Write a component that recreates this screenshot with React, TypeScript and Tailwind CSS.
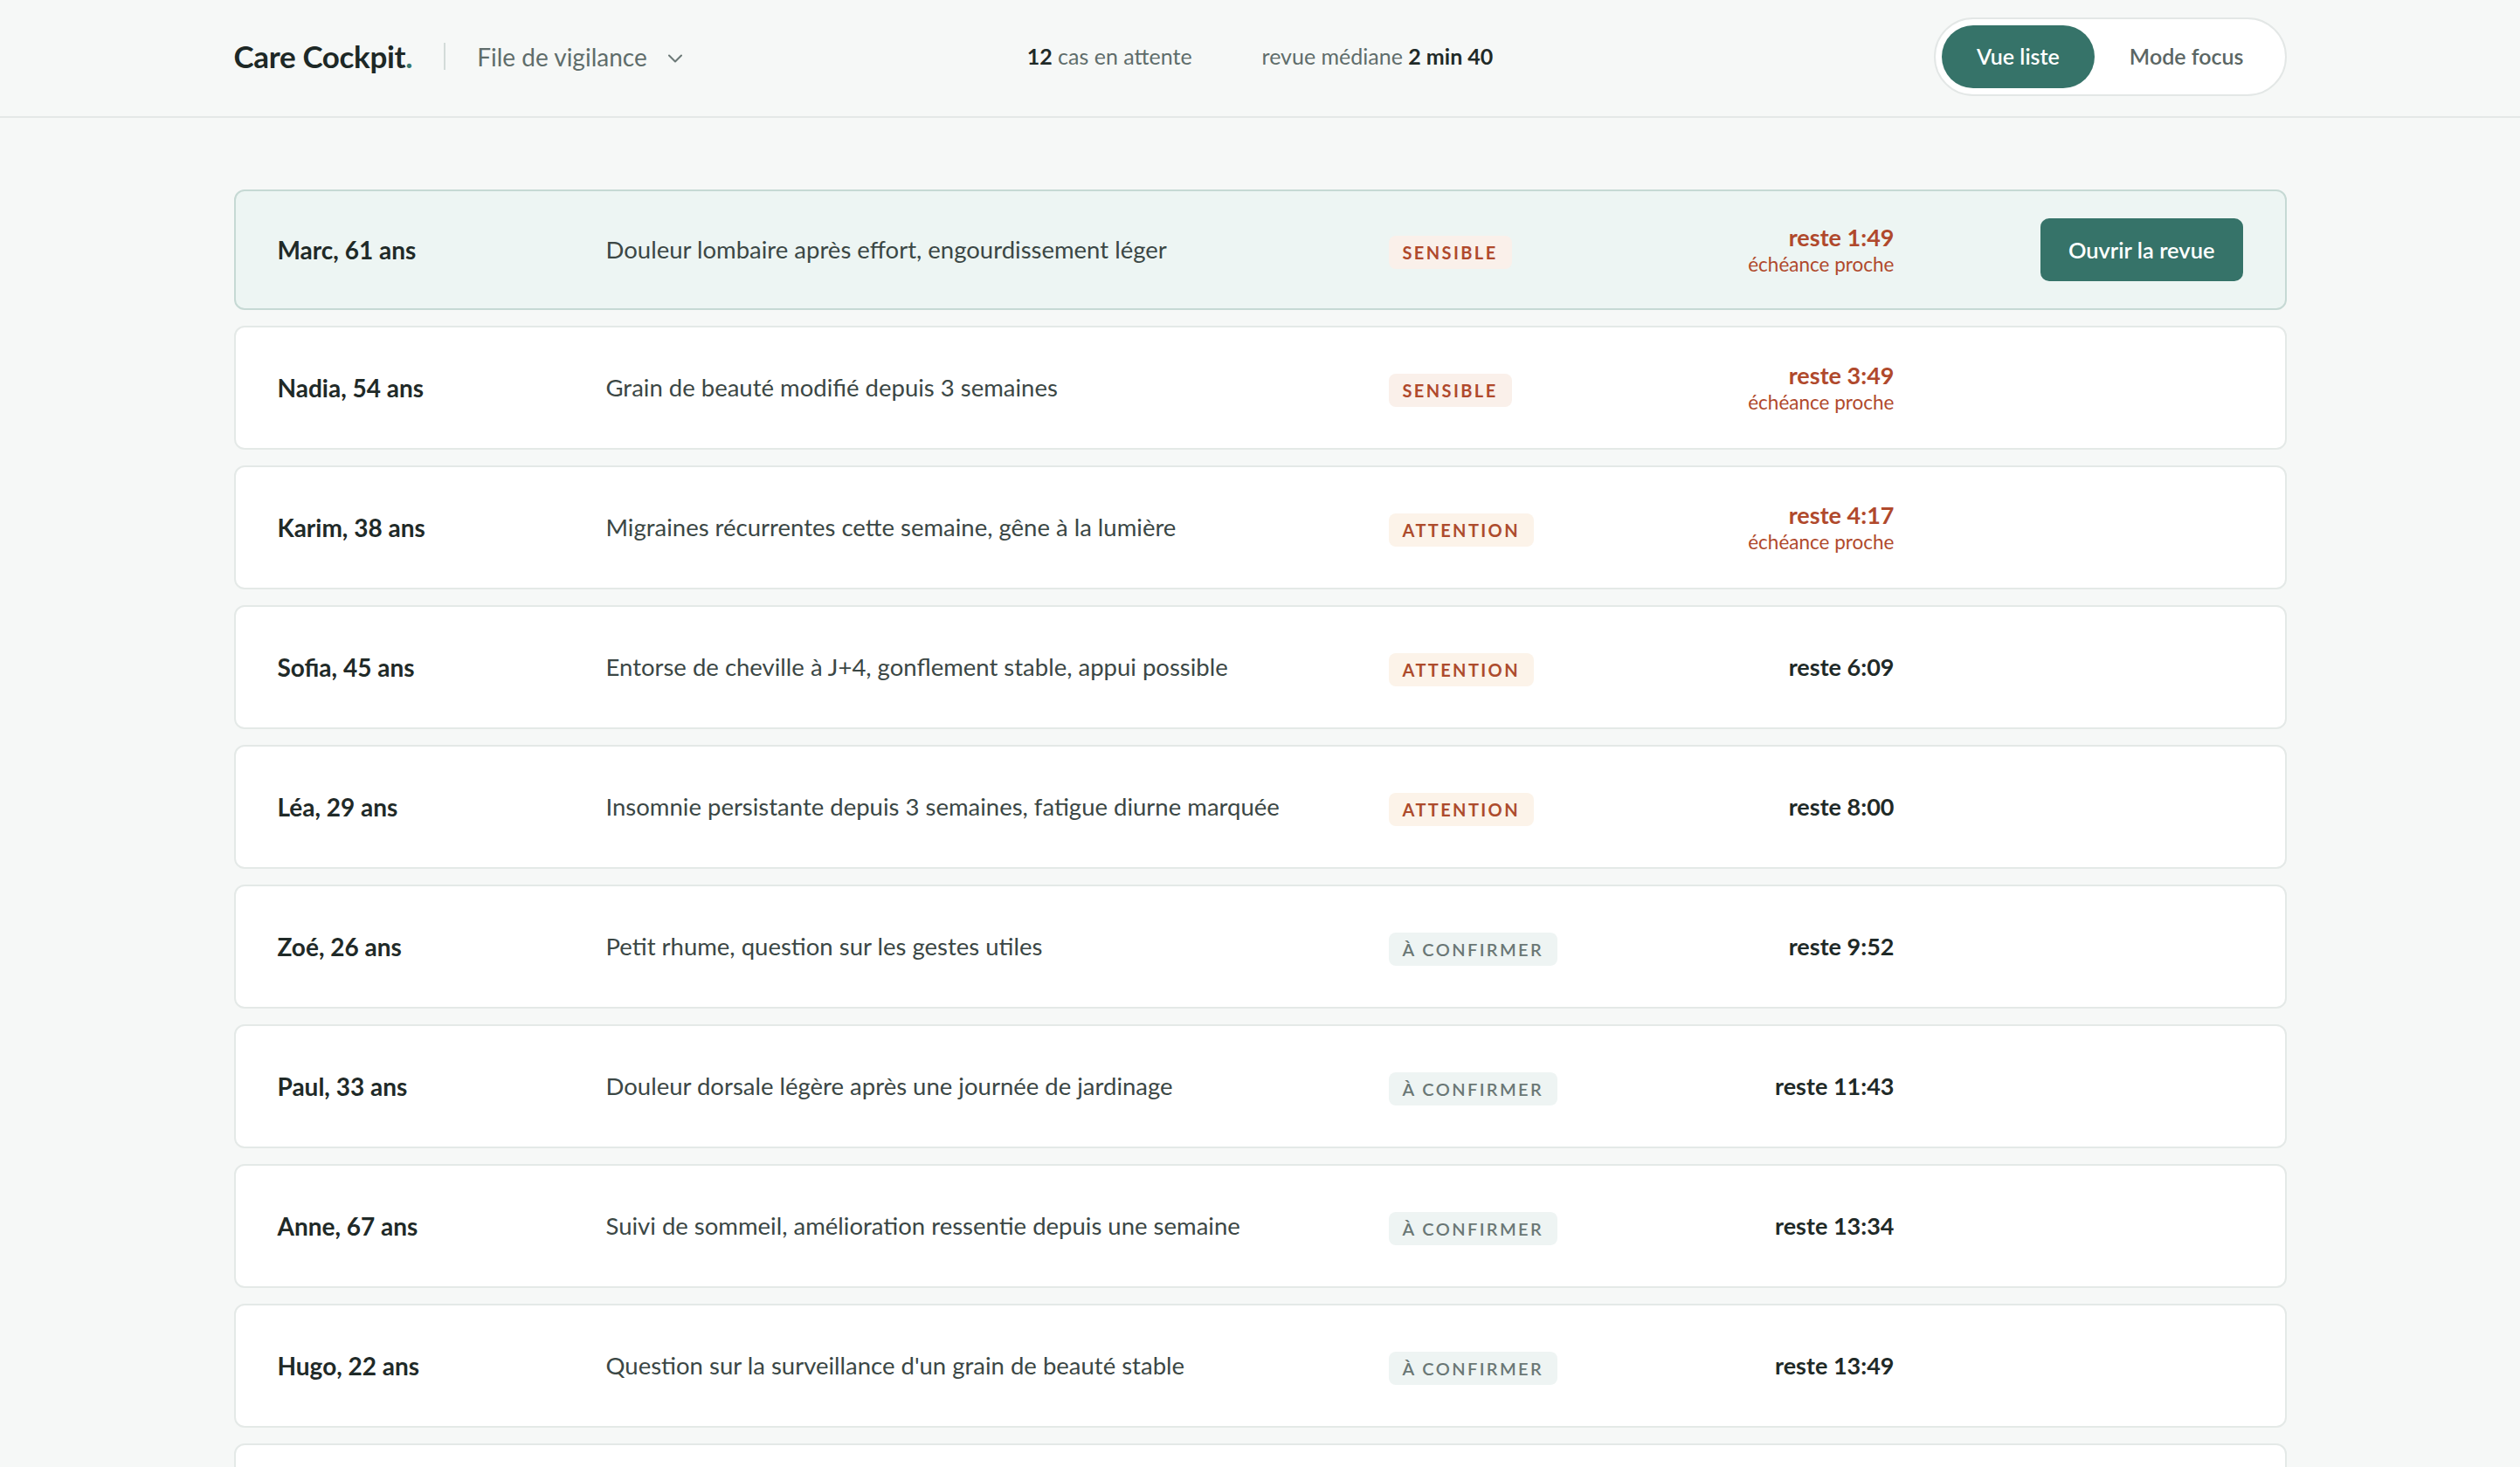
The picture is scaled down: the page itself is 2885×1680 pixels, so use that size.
import { ChevronDown } from "lucide-react";

type Level = "sensible" | "attention" | "confirmer";

type Case = {
  id: number;
  name: string;
  summary: string;
  level: Level;
  remaining: string;
  urgent?: boolean;
};

const CASES: Case[] = [
  { id: 1, name: "Marc, 61 ans", summary: "Douleur lombaire après effort, engourdissement léger", level: "sensible", remaining: "1:49", urgent: true },
  { id: 2, name: "Nadia, 54 ans", summary: "Grain de beauté modifié depuis 3 semaines", level: "sensible", remaining: "3:49", urgent: true },
  { id: 3, name: "Karim, 38 ans", summary: "Migraines récurrentes cette semaine, gêne à la lumière", level: "attention", remaining: "4:17", urgent: true },
  { id: 4, name: "Sofia, 45 ans", summary: "Entorse de cheville à J+4, gonflement stable, appui possible", level: "attention", remaining: "6:09" },
  { id: 5, name: "Léa, 29 ans", summary: "Insomnie persistante depuis 3 semaines, fatigue diurne marquée", level: "attention", remaining: "8:00" },
  { id: 6, name: "Zoé, 26 ans", summary: "Petit rhume, question sur les gestes utiles", level: "confirmer", remaining: "9:52" },
  { id: 7, name: "Paul, 33 ans", summary: "Douleur dorsale légère après une journée de jardinage", level: "confirmer", remaining: "11:43" },
  { id: 8, name: "Anne, 67 ans", summary: "Suivi de sommeil, amélioration ressentie depuis une semaine", level: "confirmer", remaining: "13:34" },
  { id: 9, name: "Hugo, 22 ans", summary: "Question sur la surveillance d'un grain de beauté stable", level: "confirmer", remaining: "13:49" },
  { id: 10, name: "Inès, 41 ans", summary: "Toux sèche depuis dix jours, sans fièvre", level: "confirmer", remaining: "15:12" },
  { id: 11, name: "Louis, 58 ans", summary: "Renouvellement de traitement, tension stable", level: "confirmer", remaining: "17:05" },
  { id: 12, name: "Chloé, 35 ans", summary: "Éruption cutanée légère après un nouveau savon", level: "confirmer", remaining: "18:30" },
];

function Badge({ level }: { level: Level }) {
  if (level === "sensible") {
    return (
      <span className="mt-[6px] inline-flex h-[38px] items-center rounded-[8px] bg-[#faf0ea] px-[16px] text-[20px] font-bold tracking-[0.12em] text-[#b0492c]">
        SENSIBLE
      </span>
    );
  }
  if (level === "attention") {
    return (
      <span className="mt-[6px] inline-flex h-[38px] items-center rounded-[8px] bg-[#fcf3e9] px-[16px] text-[20px] font-bold tracking-[0.12em] text-[#ad4b2c]">
        ATTENTION
      </span>
    );
  }
  return (
    <span className="mt-[6px] inline-flex h-[38px] items-center rounded-[8px] bg-[#eef4f3] px-[16px] text-[20px] font-semibold tracking-[0.12em] text-[#6a7775]">
      À CONFIRMER
    </span>
  );
}

function CaseRow({ item, active }: { item: Case; active: boolean }) {
  return (
    <div
      className={
        active
          ? "flex h-[138px] items-center rounded-[12px] border-2 border-[#c6d9d4] bg-[#edf5f3] px-[48px]"
          : "flex h-[142px] items-center rounded-[12px] border-2 border-[#e4e9e7] bg-white px-[48px]"
      }
    >
      <div className="w-[376px] shrink-0 text-[28px] font-bold text-[#1f2a28]">{item.name}</div>
      <div className="w-[896px] shrink-0 text-[27.5px] text-[#3b4745]">{item.summary}</div>
      <div className="flex flex-1 items-center">
        <Badge level={item.level} />
      </div>
      <div className="flex flex-col items-end text-right">
        <span
          className={
            item.urgent
              ? "text-[27px] leading-[34px] font-bold text-[#b0492c]"
              : "text-[27px] leading-[34px] font-bold text-[#1f2a28]"
          }
        >
          reste {item.remaining}
        </span>
        {item.urgent && (
          <span className="text-[22.5px] leading-[28px] text-[#b0492c]">échéance proche</span>
        )}
      </div>
      <div className="flex w-[399px] shrink-0 justify-end">
        {active && (
          <button className="h-[72px] rounded-[10px] bg-[#367369] px-[32px] text-[25.5px] font-semibold text-white">
            Ouvrir la revue
          </button>
        )}
      </div>
    </div>
  );
}

export default function App() {
  return (
    <div className="min-h-screen bg-[#f6f8f7] font-['Lato','Noto_Sans',sans-serif] text-[#1f2a28]">
      <header className="h-[135px] border-b-2 border-[#e4e8e7]">
        <div className="mx-auto flex h-full max-w-[2350px] items-center pb-[4px]">
          <div className="flex flex-1 items-center">
            <span className="text-[35px] font-bold tracking-[-0.01em] text-[#1d2826]">
              Care Cockpit<span className="text-[#3a7a6f]">.</span>
            </span>
            <span className="mx-[36px] h-[31px] w-[2px] bg-[#d3dbd9]" />
            <button className="flex items-center gap-[18px] text-[28px] text-[#5f6d6b]">
              File de vigilance
              <ChevronDown size={28} strokeWidth={1.75} className="mt-[4px] text-[#6b7876]" />
            </button>
          </div>
          <div className="flex items-center gap-[80px] text-[25px] text-[#5f6d6b]">
            <span>
              <b className="font-bold text-[#1f2a28]">12</b> cas en attente
            </span>
            <span>
              revue médiane <b className="font-bold text-[#1f2a28]">2 min 40</b>
            </span>
          </div>
          <div className="flex flex-1 justify-end">
            <div className="flex rounded-full border-2 border-[#e3e7e6] bg-white p-[7px]">
              <button className="h-[72px] rounded-full bg-[#367369] px-[40px] text-[25px] font-semibold text-white">
                Vue liste
              </button>
              <button className="h-[72px] rounded-full px-[40px] text-[25px] font-semibold text-[#5b6664]">
                Mode focus
              </button>
            </div>
          </div>
        </div>
      </header>

      <main className="mx-auto flex max-w-[2350px] flex-col gap-[18px] pt-[82px] pb-[60px]">
        {CASES.map((c, i) => (
          <CaseRow key={c.id} item={c} active={i === 0} />
        ))}
      </main>
    </div>
  );
}
